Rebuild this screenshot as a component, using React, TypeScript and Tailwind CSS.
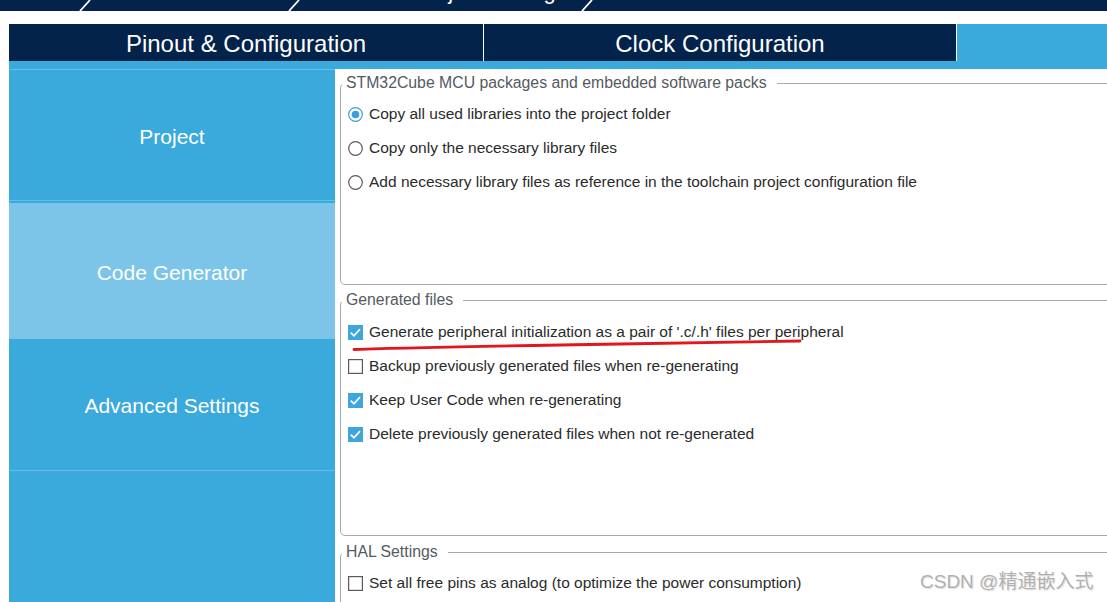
import React from "react";

const FONT = { fontFamily: '"Liberation Sans", Arial, sans-serif' };

function Radio({ checked }: { checked?: boolean }) {
  return (
    <svg width="15" height="15" viewBox="0 0 15 15" className="shrink-0">
      <circle cx="7.5" cy="7.5" r="6.8" fill="#fff" stroke={checked ? "#3a9fd8" : "#5a5a5a"} strokeWidth="1.2" />
      {checked && <circle cx="7.5" cy="7.5" r="3.8" fill="#3a9fd8" />}
    </svg>
  );
}

function Check({ checked }: { checked?: boolean }) {
  return (
    <svg width="15" height="15" viewBox="0 0 15 15" className="shrink-0">
      {checked ? (
        <>
          <rect x="0" y="0" width="15" height="15" fill="#3ea6de" />
          <polyline points="2.8,7.6 5.9,10.8 12,4.2" fill="none" stroke="#fff" strokeWidth="1.7" />
        </>
      ) : (
        <rect x="0.6" y="0.6" width="13.8" height="13.8" fill="#fff" stroke="#5a5a5a" strokeWidth="1.2" />
      )}
    </svg>
  );
}

function Row({ children, control }: { children: React.ReactNode; control: React.ReactNode }) {
  return (
    <div className="flex h-[34px] items-center gap-[6px] pl-[7px] text-[15.5px] text-[#2b2b2b]">
      {control}
      <span className="whitespace-nowrap">{children}</span>
    </div>
  );
}

function Group({
  title,
  className,
  children,
}: {
  title: string;
  className: string;
  children: React.ReactNode;
}) {
  return (
    <fieldset className={`ml-[5px] w-[800px] shrink-0 rounded-[5px] border border-[#a6aaae] ${className}`}>
      <legend className="ml-[1px] pl-[4px] pr-[10px] text-[15.8px] leading-[18px] text-[#555a5f]">{title}</legend>
      {children}
    </fieldset>
  );
}

function SideItem({
  label,
  className,
}: {
  label: string;
  className: string;
}) {
  return (
    <div className={`flex items-center justify-center pt-[3px] text-[21px] text-white ${className}`}>{label}</div>
  );
}

export default function App() {
  return (
    <div className="relative h-[602px] w-[1107px] overflow-hidden bg-white" style={FONT}>
      {/* breadcrumb strip, mostly scrolled out of view */}
      <div className="h-[11px] bg-[#03234b]">
        <svg width="1107" height="11" viewBox="0 0 1107 11">
          <g stroke="#ffffff" strokeWidth="1.8">
            <line x1="80" y1="11" x2="90" y2="0" />
            <line x1="289" y1="11" x2="299" y2="0" />
            <line x1="582" y1="11" x2="592" y2="0" />
          </g>
          <text x="414" y="-1.5" fill="#ffffff" fontSize="22" fontFamily='"Liberation Sans", Arial, sans-serif'>
            Project Manager
          </text>
        </svg>
      </div>

      {/* main tabs */}
      <div className="mt-[13px] ml-[9px] flex h-[37px]">
        <div className="flex w-[474px] items-center justify-center bg-[#03234b] pt-[2px] text-[24px] text-white">
          Pinout &amp; Configuration
        </div>
        <div className="w-[1px] bg-white" />
        <div className="flex w-[472px] items-center justify-center bg-[#03234b] pt-[2px] text-[24px] text-white">
          Clock Configuration
        </div>
        <div className="w-[1px] bg-white" />
        <div className="flex-1 bg-[#3aa9dc]" />
      </div>
      <div className="ml-[9px] h-[8px] bg-[#3aa9dc]" />

      <div className="ml-[9px] flex h-[533px]">
        {/* left navigation */}
        <div className="flex w-[326px] shrink-0 flex-col bg-[#3aa9dc]">
          <SideItem label="Project" className="h-[132px] border-y border-[#66bde8] bg-[#3aa9dc]" />
          <div className="h-[2px]" />
          <SideItem label="Code Generator" className="h-[136px] bg-[#7dc5e8]" />
          <SideItem label="Advanced Settings" className="h-[132px] border-b border-[#66bde8] bg-[#3aa9dc]" />
        </div>

        {/* settings panel */}
        <div className="relative flex flex-1 flex-col overflow-hidden bg-white pt-[5px]">
          <Group title="STM32Cube MCU packages and embedded software packs" className="h-[211px] pt-[5px]">
            <Row control={<Radio checked />}>Copy all used libraries into the project folder</Row>
            <Row control={<Radio />}>Copy only the necessary library files</Row>
            <Row control={<Radio />}>Add necessary library files as reference in the toolchain project configuration file</Row>
          </Group>

          <Group title="Generated files" className="mt-[6px] h-[245px] pt-[6px]">
            <Row control={<Check checked />}>Generate peripheral initialization as a pair of '.c/.h' files per peripheral</Row>
            <Row control={<Check />}>Backup previously generated files when re-generating</Row>
            <Row control={<Check checked />}>Keep User Code when re-generating</Row>
            <Row control={<Check checked />}>Delete previously generated files when not re-generated</Row>
          </Group>

          <Group title="HAL Settings" className="mt-[7px] h-[120px] pt-[5px]">
            <Row control={<Check />}>Set all free pins as analog (to optimize the power consumption)</Row>
          </Group>
        </div>
      </div>

      {/* red pen mark under the first generated-files option */}
      <svg className="pointer-events-none absolute left-0 top-0" width="1107" height="602" viewBox="0 0 1107 602">
        <path
          d="M354 349.5 C 420 347, 520 345.5, 620 344 C 700 343, 760 342, 800 341"
          fill="none"
          stroke="#e3161d"
          strokeWidth="2.8"
          strokeLinecap="round"
        />
      </svg>

      {/* watermark */}
      <div
        className="absolute left-[920px] top-[570px] whitespace-nowrap text-[19px] leading-[24px] text-[#b0b0b0]"
        style={{
          fontFamily: '"Liberation Sans", "Noto Sans CJK SC", sans-serif',
          textShadow: "0 0 1px #ffffff, 1px 1px 1px #dcdcdc",
        }}
      >
        CSDN @精通嵌入式
      </div>
    </div>
  );
}
